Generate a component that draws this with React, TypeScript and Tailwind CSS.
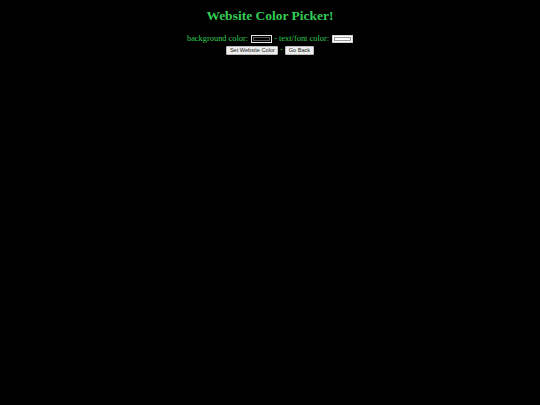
export default function App() {
  return (
    <main className="min-h-[405px] w-full bg-black text-[#33cc55] [font-family:'Liberation_Serif',serif]">
      <div className="flex flex-col items-center pt-[8px]">
        <h1 className="text-[13.5px] font-bold leading-[16px]">Website Color Picker!</h1>

        <div className="mt-[10px] flex items-center text-[8.4px] leading-[10px]">
          <span>background color:</span>
          <span className="ml-[3px] inline-block h-[8px] w-[21px] border border-[#e5e5e5] bg-black p-[1px]">
            <span className="block h-full w-full border border-[#555] bg-black" />
          </span>
          <span className="ml-[2px]">- text/font color:</span>
          <span className="ml-[3px] inline-block h-[8px] w-[21px] border border-[#d0d0d0] bg-white p-[1px]">
            <span className="block h-full w-full border border-[#999] bg-white" />
          </span>
        </div>

        <div className="mt-[1px] flex items-center text-[8.4px] leading-[10px]">
          <button className="h-[9px] rounded-[1px] border border-[#bbb] bg-[#efefef] px-[2.5px] text-[5.6px] leading-[7px] text-[#222] [font-family:'Liberation_Sans',sans-serif]">
            Set Website Color
          </button>
          <span className="mx-[2px]">-</span>
          <button className="h-[9px] rounded-[1px] border border-[#bbb] bg-[#efefef] px-[2.5px] text-[5.6px] leading-[7px] text-[#222] [font-family:'Liberation_Sans',sans-serif]">
            Go Back
          </button>
        </div>
      </div>
    </main>
  );
}
